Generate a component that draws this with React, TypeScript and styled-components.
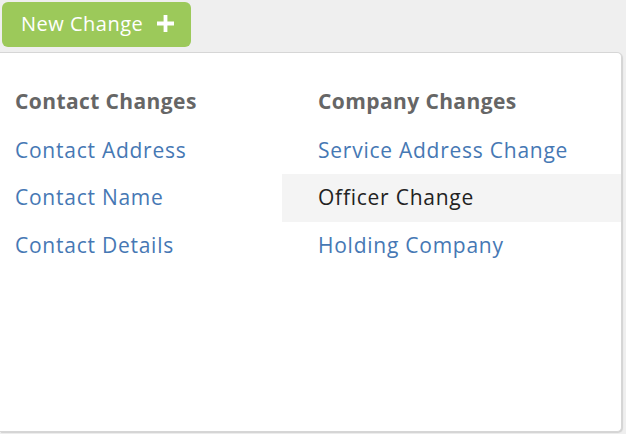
import React from "react";
import styled, { createGlobalStyle } from "styled-components";

const colors = {
  page: "#efefef",
  green: "#9cc95a",
  blue: "#4678b4",
  heading: "#666666",
  dark: "#222222",
  highlight: "#f4f4f4",
  border: "#d6d6d6",
};

const font = `"Open Sans", "Liberation Sans", sans-serif`;

const GlobalStyle = createGlobalStyle`
  html, body {
    margin: 0;
    padding: 0;
    background: ${colors.page};
    font-family: ${font};
  }
`;

interface ItemProps {
  $active?: boolean;
  $indent?: number;
}

const columns = [
  {
    title: "Contact Changes",
    indent: 15,
    items: ["Contact Address", "Contact Name", "Contact Details"],
  },
  {
    title: "Company Changes",
    indent: 36,
    items: ["Service Address Change", "Officer Change", "Holding Company"],
  },
];

const App: React.FC = () => {
  return (
    <>
      <GlobalStyle />
      <Page>
        <Toolbar>
          <NewButton>
            New Change
            <svg width="17" height="17" viewBox="0 0 17 17" aria-hidden="true">
              <path d="M6.6 0h3.8v6.6H17v3.8h-6.6V17H6.6v-6.6H0V6.6h6.6z" fill="#fff" />
            </svg>
          </NewButton>
        </Toolbar>
        <Panel>
          {columns.map((col) => (
            <Column key={col.title}>
              <Heading $indent={col.indent}>{col.title}</Heading>
              {col.items.map((item) => (
                <Item key={item} $indent={col.indent} $active={item === "Officer Change"}>
                  {item}
                </Item>
              ))}
            </Column>
          ))}
        </Panel>
      </Page>
    </>
  );
};

const Page = styled.div`
  width: 626px;
  height: 434px;
  display: flex;
  flex-direction: column;
`;

const Toolbar = styled.div`
  display: flex;
  padding: 2px 0 0 2px;
  height: 52px;
  box-sizing: border-box;
`;

const NewButton = styled.button`
  display: flex;
  align-items: center;
  gap: 14px;
  width: 189px;
  height: 45px;
  padding: 0 0 2px 19px;
  border: none;
  border-radius: 6px;
  background: ${colors.green};
  color: #fff;
  font: 20px ${font};
  letter-spacing: 0.5px;
  cursor: pointer;
`;

const Panel = styled.div`
  width: 622px;
  height: 380px;
  box-sizing: border-box;
  background: #fff;
  border: 1px solid ${colors.border};
  border-left: none;
  border-radius: 0 5px 5px 0;
  box-shadow: 1px 1px 1px rgba(0, 0, 0, 0.12);
  padding-top: 26px;
  display: grid;
  grid-template-columns: 282px 1fr;
  align-content: start;
`;

const Column = styled.div`
  display: flex;
  flex-direction: column;
`;

const Row = styled.div<ItemProps>`
  height: 47.5px;
  box-sizing: border-box;
  display: flex;
  align-items: center;
  padding: 0 0 1px ${(p) => p.$indent ?? 15}px;
  font-size: 21px;
  letter-spacing: 0.75px;
`;

const Heading = styled(Row)`
  color: ${colors.heading};
  font-weight: 700;
  letter-spacing: 0.4px;
  padding-bottom: 4px;
`;

const Item = styled(Row)<ItemProps>`
  color: ${(p) => (p.$active ? colors.dark : colors.blue)};
  background: ${(p) => (p.$active ? colors.highlight : "transparent")};
  cursor: pointer;
`;

export default App;
